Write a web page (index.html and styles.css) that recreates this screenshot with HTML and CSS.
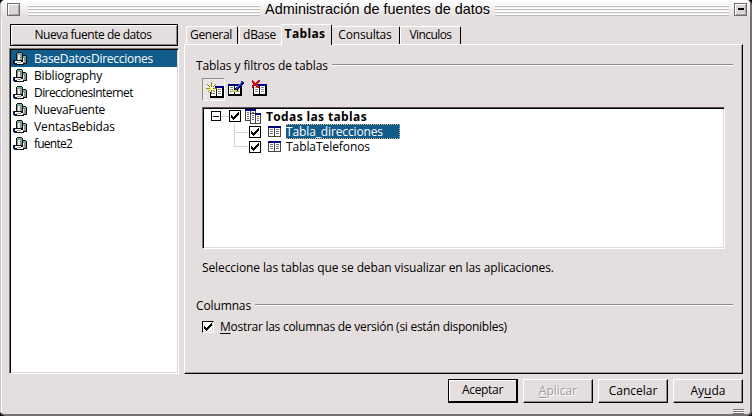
FILE: index.html
```html
<!DOCTYPE html>
<html lang="es">
<head>
<meta charset="utf-8">
<title>Administración de fuentes de datos</title>
<link rel="stylesheet" href="styles.css">
</head>
<body>
<svg class="defs" width="0" height="0" aria-hidden="true">
  <symbol id="db" viewBox="0 0 15 14">
    <path fill="#111" d="M4 0h5v1h1v2h3v1h1v8h-3v1H2v-1H0V8h3V1h1z"/>
    <path fill="#5fc0a8" d="M4 1h5v1H4zM10 4h3v1h-3z"/>
    <path fill="#8b9495" d="M4 2h5v6H4zM10 5h3v6h-3z"/>
    <path fill="#e8eeee" d="M5 3h2v5H5zM10 6h1v4h-1z"/>
    <path fill="#fff" d="M2 9h6v1h2v2H4v-1H2z"/>
    <path fill="#999" d="M4 10h4v1H4z"/>
    <path fill="#0b1670" d="M0 8h1v4H0zM1 12h2v1H1z"/>
  </symbol>
  <symbol id="table" viewBox="0 0 13 11">
    <path fill="#444" d="M0 0h13v11H0z"/>
    <path fill="#fff" d="M1 2h5v8H1zM7 2h5v8H7z"/>
    <path fill="#00007c" d="M0 0h13v2H0z"/>
    <path fill="#777" d="M2 3h3v1H2zM2 5h3v1H2zM2 7h3v1H2zM8 3h3v1H8zM8 5h3v1H8zM8 7h3v1H8z"/>
  </symbol>
  <symbol id="tables" viewBox="0 0 16 15">
    <path fill="#444" d="M0 0h11v12H0z"/>
    <path fill="#fff" d="M1 2h4v9H1zM6 2h4v9H6z"/>
    <path fill="#777" d="M2 3h2v1H2zM2 5h2v1H2zM2 7h2v1H2zM2 9h2v1H2zM7 3h2v1H7z"/>
    <path fill="#00007c" d="M0 0h11v2H0z"/>
    <path fill="#444" d="M5 4h11v11H5z"/>
    <path fill="#fff" d="M6 5h4v9H6zM11 6h4v8h-4z"/>
    <path fill="#777" d="M7 6h2v1H7zM7 8h2v1H7zM7 10h2v1H7zM12 7h2v1h-2zM12 9h2v1h-2zM12 11h2v1h-2z"/>
    <path fill="#00007c" d="M10 4h6v2h-6z"/>
  </symbol>
  <symbol id="grid" viewBox="0 0 14 12">
    <path fill="#000" d="M0 0h14v12H0z"/>
    <path fill="#fff" d="M1 2h5v8H1zM7 2h5v8H7z"/>
    <path fill="#00007c" d="M0 0h14v2H0z"/>
    <path fill="#888" d="M2 3h3v1H2zM2 5h3v1H2zM2 7h3v1H2zM8 3h3v1H8zM8 5h3v1H8zM8 7h3v1H8z"/>
  </symbol>
  <symbol id="check" viewBox="0 0 8 8">
    <path fill="#000" d="M0 3h1v1h1v1h1V4h1V3h1V2h1V1h1V0h1v3H7v1H6v1H5v1H4v1H3v1H2V7H1V6H0z"/>
  </symbol>
</svg>
<div class="window">
  <header class="titlebar">
    <span class="winbtn"></span>
    <span class="stripes"></span>
    <h1>Administración de fuentes de datos</h1>
    <span class="stripes right"></span>
    <span class="winbtn min"></span>
  </header>
  <main class="content">
    <aside class="sources">
      <button class="new s47">Nueva fuente de datos</button>
      <ul class="list">
        <li class="sel s27"><svg class="db"><use href="#db"/></svg>BaseDatosDirecciones</li>
        <li class="s18"><svg class="db"><use href="#db"/></svg>Bibliography</li>
        <li class="s58"><svg class="db"><use href="#db"/></svg>DireccionesInternet</li>
        <li class="s31"><svg class="db"><use href="#db"/></svg>NuevaFuente</li>
        <li class="s12"><svg class="db"><use href="#db"/></svg>VentasBebidas</li>
        <li class="s77"><svg class="db"><use href="#db"/></svg>fuente2</li>
      </ul>
    </aside>
    <section class="tabbed">
      <nav class="tabs">
        <span class="tab t1 s31">General</span>
        <span class="tab t2 s27">dBase</span>
        <span class="tab active">Tablas</span>
        <span class="tab t4 s18">Consultas</span>
        <span class="tab t5 s58">Vinculos</span>
      </nav>
      <div class="panel">
        <div class="group"><span class="s10">Tablas y filtros de tablas</span><i></i></div>
        <div class="tools">
          <span class="tool pressed"><svg width="18" height="17" viewBox="0 0 18 17"><use href="#grid" x="4" y="4" width="14" height="12"/><path fill="#ebe6e6" d="M3 3h6v7H3z"/><path fill="none" stroke="#8d8d16" d="M5.500 0v12M0 6.500h11M1.500 2.500l8 8M9.500 2.500l-8 8"/><path fill="#ffff68" d="M4 5h3v3H4z"/></svg></span>
          <span class="tool"><svg width="18" height="17" viewBox="0 0 18 17"><use href="#grid" x="0" y="4" width="14" height="12"/><path fill="#d4d63d" d="M4 10h5v1H8v1H4z"/><path fill="none" stroke="#06066e" stroke-width="3" d="M8 10l7-8"/><path fill="none" stroke="#3262cc" d="M8 9l7-8"/></svg></span>
          <span class="tool"><svg width="18" height="17" viewBox="0 0 18 17"><use href="#grid" x="1" y="4" width="14" height="12"/><path fill="none" stroke="#d20a18" stroke-width="2" d="M0 1l7 7M8 0L0 7"/></svg></span>
        </div>
        <div class="tree">
          <div class="node root"><span class="expander"></span><i class="link"></i><span class="box"><svg><use href="#check"/></svg></span><svg class="tables"><use href="#tables"/></svg><b>Todas las tablas</b></div>
          <div class="node child"><i class="branch"></i><span class="box"><svg><use href="#check"/></svg></span><svg class="table"><use href="#table"/></svg><span class="label sel s13">Tabla_direcciones</span></div>
          <div class="node child"><i class="branch"></i><span class="box"><svg><use href="#check"/></svg></span><svg class="table"><use href="#table"/></svg><span class="label s07">TablaTelefonos</span></div>
        </div>
        <p class="hint s10">Seleccione las tablas que se deban visualizar en las aplicaciones.</p>
        <div class="group"><span class="s13">Columnas</span><i></i></div>
        <label class="option s27"><span class="box sunken"><svg><use href="#check"/></svg></span><span><u>M</u>ostrar las columnas de versión (si están disponibles)</span></label>
      </div>
    </section>
  </main>
  <footer class="actions">
    <button class="default s31">Aceptar</button>
    <button class="off"><u>A</u>plicar</button>
    <button>Cancelar</button>
    <button>Ay<u>u</u>da</button>
  </footer>
  <div class="grip"></div>
</div>
</body>
</html>
```
FILE: styles.css
```css
* { box-sizing: border-box; }
body {
  margin: 0;
  background: #000;
  font: 12px/17px "Open Sans", "Noto Sans", sans-serif;
  color: #000;
}
svg { shape-rendering: crispEdges; flex: none; display: block; }
.defs { position: absolute; }
ul, p, h1 { margin: 0; padding: 0; }
u { text-underline-offset: 2px; text-decoration-thickness: 1px; }

.window {
  width: 752px;
  height: 416px;
  overflow: hidden;
  background: #e5dede;
  border: solid;
  border-width: 0 2px 2px 1px;
  border-color: #f4f1f1 #777072 #777072 #c9c3c3;
  border-radius: 5px;
  box-shadow: inset 1px 1px #fff;
}

.titlebar {
  display: flex;
  align-items: center;
  height: 17px;
  padding: 0 3px 0 6px;
  background: linear-gradient(#fff, #e5dede);
}
.titlebar h1 {
  width: 235px;
  text-align: center;
  font: 14.4px/18px "Liberation Sans", sans-serif;
  white-space: nowrap;
}
.winbtn {
  width: 13px;
  height: 13px;
  margin-top: 1px;
  border: 1px solid #6f6b70;
  box-shadow: inset 1px 1px #fff, inset -1px -1px #aaa4a8;
  background: #ddd6d8;
}
.min { display: grid; place-items: center; }
.min::before { content: ""; width: 6px; height: 2px; background: #000; }
.stripes {
  width: 232px;
  height: 11px;
  margin: 4px 0 0 8px;
  background: repeating-linear-gradient(#fff 0 1px, #c2bdc0 1px 2px, #f6f3f3 2px 3px);
}
.stripes.right { margin: 4px 5px 0 0; flex: 1; }

.content { display: flex; padding: 7px 7px 0 8px; height: 357px; }
.sources { width: 170px; margin-right: 5px; display: flex; flex-direction: column; }
button {
  font: inherit;
  color: inherit;
  padding: 0;
  border: 0;
  border-radius: 0;
  background: #e5dede;
  white-space: nowrap;
}
.new {
  width: 168px;
  height: 22px;
  margin-left: 1px;
  padding: 0 2px 2px 0;
  border: 1px solid #000;
  box-shadow: inset 1px 1px #fff, inset -1px -1px #8f888a;
}
.list {
  list-style: none;
  flex: 1;
  margin-top: 2px;
  padding-top: 1px;
  background: #fff;
  border: 1px solid #000;
  border-color: #777 #fff #fff #777;
  box-shadow: inset 1px 1px #000, inset -1px -1px #ded7d7;
}
.list li { display: flex; align-items: center; height: 17px; padding: 0 0 1px 2px; margin: 0 1px; gap: 6px; }
.list li.sel { background: #125c8c; color: #fff; }
.db { width: 15px; height: 14px; position: relative; top: 1px; }

.tabbed { flex: 1; display: flex; flex-direction: column; }
.tabs { display: flex; align-items: flex-end; height: 20px; padding-left: 2px; }
.tab {
  height: 18px;
  line-height: 16px;
  text-align: center;
  white-space: nowrap;
  border: solid;
  border-width: 1px 1px 0 1px;
  border-color: #fff #000 #fff #fff;
  border-radius: 2px 2px 0 0;
}
.t1 { width: 52px; padding-right: 2px; margin-right: 1px; }
.t2 { width: 42px; padding-right: 2px; border-right: 0; }
.active {
  position: relative;
  width: 51px;
  height: 21px;
  margin-bottom: -1px;
  padding-right: 3px;
  background: #e5dede;
  font-weight: bold;
  letter-spacing: .35px;
  line-height: 18px;
}
.t4 { width: 68px; padding-right: 1px; border-left: 0; }
.t5 { width: 61px; }
.panel {
  flex: 1;
  border: 1px solid #fff;
  border-color: #fff #000 #000 #fff;
  box-shadow: inset -1px -1px #a39c9e;
  padding: 12px 9px 0 11px;
}
.group { display: flex; align-items: center; gap: 4px; height: 17px; }
.group i { flex: 1; height: 2px; margin-top: -1px; border-top: 1px solid #8f888a; background: #fff; }
.tools { display: flex; gap: 1px; margin: 4px 0 0 6px; height: 25px; }
.tool { width: 23px; height: 23px; padding: 2px; }
.pressed { border: 1px solid #fff; border-color: #938c8e #fff #fff #938c8e; background: #ebe6e6; padding: 3px; }
.tree {
  width: 523px;
  height: 142px;
  margin: 4px 0 0 6px;
  padding-left: 6px;
  background: #fff;
  border: 1px solid #000;
  border-color: #555 #fff #fff #777;
  box-shadow: inset 1px 1px #000, inset -1px -1px #ded7d7;
}
.node { display: flex; align-items: center; height: 15px; white-space: nowrap; }
.root { height: 16px; }
.root b { margin-left: 5px; letter-spacing: .36px; }
.expander { width: 10px; height: 10px; margin-left: 2px; border: 1px solid #000; display: grid; place-items: center; }
.expander::before { content: ""; width: 6px; height: 1px; background: #000; }
.link { width: 8px; height: 1px; background: #d4d4d4; }
.box { width: 12px; height: 12px; border: 1px solid #000; background: #fff; display: grid; place-items: center; flex: none; }
.box svg { width: 8px; height: 8px; }
.tables { width: 16px; height: 15px; margin-left: 4px; }
.branch { width: 14px; height: 15px; margin: 0 1px 0 25px; border-left: 1px solid #d4d4d4; }
.node:last-child .branch { height: 8px; margin-bottom: 7px; border-bottom: 1px solid #d4d4d4; }
.branch::after { content: ""; display: block; height: 8px; border-bottom: 1px solid #d4d4d4; }
.node:last-child .branch::after { display: none; }
.table { width: 13px; height: 11px; margin: 0 5px 0 7px; }
.label { line-height: 13px; }
.label.sel { width: 114px; height: 15px; line-height: 13px; border: 1px dotted #d9b27a; border-width: 1px 1px 1px 0; background: #125c8c; color: #fff; }
.hint { margin: 10px 0 21px 6px; height: 17px; white-space: nowrap; }
.option { display: flex; align-items: center; gap: 6px; height: 17px; margin: 4px 0 0 6px; white-space: nowrap; }
.sunken { border-color: #000 #fff #fff #000; box-shadow: inset -1px -1px #ded7d7; }

.actions { display: flex; justify-content: flex-end; gap: 5px; padding: 5px 7px 0 0; }
.actions button {
  width: 70px;
  height: 24px;
  padding-bottom: 2px;
  border: 1px solid;
  border-color: #fff #000 #000 #fff;
  box-shadow: inset -1px -1px #8f888a;
}
.actions .default { border-color: #000; border-width: 1px 2px 2px 1px; box-shadow: inset 1px 1px #fff; }
.actions .off { color: #a39c9e; text-shadow: 1px 1px #fff; }
.grip {
  width: 11px;
  height: 5px;
  margin: 6px 6px 0 auto;
  background: repeating-linear-gradient(#777072 0 1px, #fff 1px 2px);
}

.s07 { letter-spacing: -.07px; }
.s10 { letter-spacing: -.1px; }
.s12 { letter-spacing: -.12px; }
.s13 { letter-spacing: -.13px; }
.s18 { letter-spacing: -.18px; }
.s27 { letter-spacing: -.27px; }
.s31 { letter-spacing: -.31px; }
.s47 { letter-spacing: -.47px; }
.s58 { letter-spacing: -.58px; }
.s77 { letter-spacing: -.77px; }
```
